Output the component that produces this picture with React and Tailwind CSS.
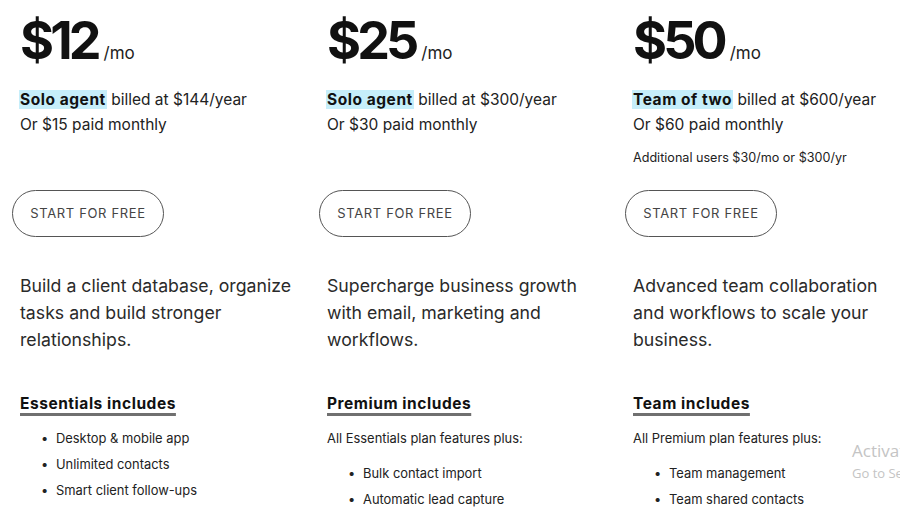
import React from "react";

const plans = [
  {
    price: "$12",
    tag: "Solo agent",
    billed: "billed at $144/year",
    monthly: "Or $15 paid monthly",
    extra: null,
    desc: ["Build a client database, organize", "tasks and build stronger", "relationships."],
    heading: "Essentials includes",
    intro: null,
    items: ["Desktop & mobile app", "Unlimited contacts", "Smart client follow-ups"],
  },
  {
    price: "$25",
    tag: "Solo agent",
    billed: "billed at $300/year",
    monthly: "Or $30 paid monthly",
    extra: null,
    desc: ["Supercharge business growth", "with email, marketing and", "workflows."],
    heading: "Premium includes",
    intro: "All Essentials plan features plus:",
    items: ["Bulk contact import", "Automatic lead capture"],
  },
  {
    price: "$50",
    tag: "Team of two",
    billed: "billed at $600/year",
    monthly: "Or $60 paid monthly",
    extra: "Additional users $30/mo or $300/yr",
    desc: ["Advanced team collaboration", "and workflows to scale your", "business."],
    heading: "Team includes",
    intro: "All Premium plan features plus:",
    items: ["Team management", "Team shared contacts"],
  },
];

function Plan({ p }) {
  return (
    <div className="flex flex-col pl-[20px]">
      <div className="flex items-baseline pt-[15px] h-[67px]">
        <span className="text-[52px] leading-[52px] font-bold tracking-[-0.075em] text-[#111]">{p.price}</span>
        <span className="ml-[6px] text-[17px] text-[#222]">/mo</span>
      </div>
      <div className="mt-[20px] h-[103px] text-[15.5px] leading-[25px] text-[#222]">
        <div>
          <span className="bg-[#c6eefa] font-bold text-[#111] px-[1px] -ml-[1px] tracking-[0.035em]">{p.tag}</span>{" "}
          {p.billed}
        </div>
        <div>{p.monthly}</div>
        {p.extra && <div className="mt-[11px] text-[12.6px] leading-[20px] text-[#222]">{p.extra}</div>}
      </div>
      <button className="-ml-[8px] w-[152px] h-[47px] rounded-full border border-[#555] text-[13px] tracking-[0.05em] text-[#444] bg-white">
        START FOR FREE
      </button>
      <div className="mt-[35px] text-[17.7px] leading-[27px] text-[#2a2a2a]">
        {p.desc.map((l, i) => (
          <div key={i}>{l}</div>
        ))}
      </div>
      <div className="mt-[41px] text-[15.5px] leading-[20px] font-bold text-[#111] tracking-[0.035em]">
        <span className="underline decoration-[2.5px] decoration-[#707070] underline-offset-[4px]">{p.heading}</span>
      </div>
      <div className="mt-[12px] text-[12.9px] leading-[26px] text-[#222]">
        {p.intro && <div className="mb-[9px]">{p.intro}</div>}
        {p.items.map((it, i) => (
          <div key={i} className="flex">
            <span className="w-[36px] pl-[21px]">•</span>
            <span>{it}</span>
          </div>
        ))}
      </div>
    </div>
  );
}

export default function App() {
  return (
    <div
      className="relative w-[900px] h-[508px] overflow-hidden bg-white"
      style={{ fontFamily: "Inter, 'Liberation Sans', sans-serif" }}
    >
      <div className="grid grid-cols-[307px_306px_287px]">
        {plans.map((p, i) => (
          <Plan key={i} p={p} />
        ))}
      </div>
      <div
        className="absolute left-[852px] top-[438px] text-[#c4c4c4] whitespace-nowrap"
        style={{ fontFamily: "'Open Sans', 'DejaVu Sans', sans-serif" }}
      >
        <div className="text-[17px] leading-[26px]">Activate Windows</div>
        <div className="text-[13px] leading-[18px]">Go to Settings to activate Windows.</div>
      </div>
    </div>
  );
}
